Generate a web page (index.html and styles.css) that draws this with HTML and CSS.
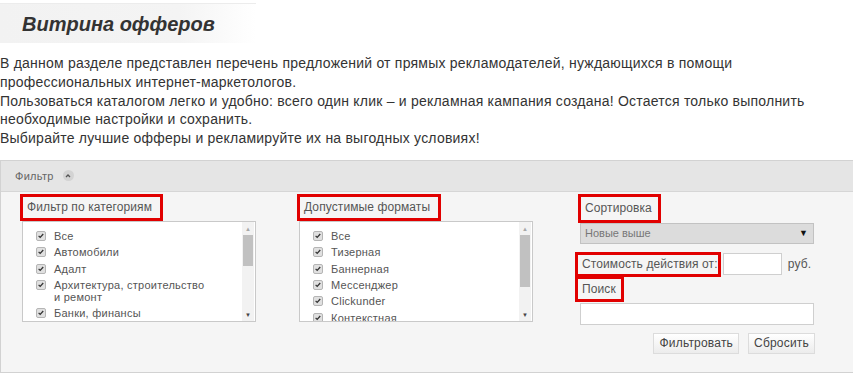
FILE: index.html
```html
<!DOCTYPE html>
<html lang="ru">
<head>
<meta charset="utf-8">
<title>Витрина офферов</title>
<link rel="stylesheet" href="styles.css">
</head>
<body>
<div class="title-box"><h1>Витрина офферов</h1></div>
<div class="intro">
В данном разделе представлен перечень предложений от прямых рекламодателей, нуждающихся в помощи<br>
профессиональных интернет-маркетологов.<br>
Пользоваться каталогом легко и удобно: всего один клик – и рекламная кампания создана! Остается только выполнить<br>
необходимые настройки и сохранить.<br>
Выбирайте лучшие офферы и рекламируйте их на выгодных условиях!
</div>

<div class="panel">
  <div class="panel-head">
    <span>Фильтр</span>
    <span class="toggle"><svg width="10" height="10" viewBox="0 0 10 10"><path d="M3 6 L5 4 L7 6" fill="none" stroke="#555" stroke-width="1.3"/></svg></span>
  </div>
  <div class="panel-body">
    <div class="col">
      <div class="mark">Фильтр по категориям</div>
      <div class="listbox">
        <ul class="items">
          <li><span class="cb"></span><span class="lbl">Все</span></li>
          <li><span class="cb"></span><span class="lbl">Автомобили</span></li>
          <li><span class="cb"></span><span class="lbl">Адалт</span></li>
          <li><span class="cb"></span><span class="lbl">Архитектура, строительство и ремонт</span></li>
          <li><span class="cb"></span><span class="lbl">Банки, финансы</span></li>
        </ul>
        <div class="sbar"><span class="arr">▲</span><span class="thumb"></span><span class="fill"></span><span class="arr">▼</span></div>
      </div>
    </div>
    <div class="col">
      <div class="mark">Допустимые форматы</div>
      <div class="listbox">
        <ul class="items">
          <li><span class="cb"></span><span class="lbl">Все</span></li>
          <li><span class="cb"></span><span class="lbl">Тизерная</span></li>
          <li><span class="cb"></span><span class="lbl">Баннерная</span></li>
          <li><span class="cb"></span><span class="lbl">Мессенджер</span></li>
          <li><span class="cb"></span><span class="lbl">Clickunder</span></li>
          <li><span class="cb"></span><span class="lbl">Контекстная</span></li>
        </ul>
        <div class="sbar"><span class="arr">▲</span><span class="thumb thumb-long"></span><span class="fill"></span><span class="arr">▼</span></div>
      </div>
    </div>
    <div class="col">
      <div class="mark mark-sort">Сортировка</div>
      <div class="select"><span>Новые выше</span><span class="sel-arr">▼</span></div>
      <div class="cost-row">
        <div class="mark">Стоимость действия от:</div>
        <div class="input input-cost"></div>
        <span class="unit">руб.</span>
      </div>
      <div class="mark mark-search">Поиск</div>
      <div class="input input-search"></div>
      <div class="buttons">
        <button class="btn">Фильтровать</button>
        <button class="btn">Сбросить</button>
      </div>
    </div>
  </div>
</div>
</body>
</html>
```

FILE: styles.css
```css
* { box-sizing: border-box; }
body {
  margin: 0;
  background: #fff;
  font-family: "Liberation Sans", Arial, sans-serif;
  color: #333;
}
.title-box {
  margin-top: 3px;
  width: 256px;
  height: 40px;
  padding-left: 22px;
  background: linear-gradient(to right, #f2f2f2 0%, #f4f4f4 70%, #fff 100%);
  border-top: 1px solid #ececec;
}
.title-box h1 {
  margin: 0;
  font-size: 20px;
  font-weight: bold;
  font-style: italic;
  line-height: 40px;
  color: #333;
}
.intro {
  margin-top: 11px;
  font-size: 14px;
  line-height: 18.75px;
  letter-spacing: 0.22px;
  color: #333;
}
.panel {
  margin-top: 12px;
  border: 1px solid #d2d2d2;
  border-right: none;
  background: #f5f5f5;
  height: 213px;
}
.panel-head {
  height: 31px;
  background: #e5e5e5;
  border-bottom: 1px solid #d6d6d6;
  display: flex;
  align-items: center;
  padding-left: 14px;
  gap: 9px;
  font-size: 11px;
  color: #666;
  letter-spacing: 0.3px;
}
.toggle {
  width: 11px;
  height: 11px;
  border-radius: 50%;
  background: #d3d3d3;
  display: flex;
  align-items: center;
  justify-content: center;
}
.panel-body {
  display: grid;
  grid-template-columns: 277px 278px 1fr;
  padding: 2px 0 0 19px;
}
.mark {
  display: inline-block;
  border: 3px solid #e10000;
  padding: 3px 8px 3px 4px;
  font-size: 12px;
  line-height: 15px;
  color: #555;
  letter-spacing: 0.1px;
  white-space: nowrap;
}
.col { display: flex; flex-direction: column; align-items: flex-start; }
.listbox {
  margin-left: 2px;
  width: 234px;
  height: 101px;
  background: #fff;
  border: 1px solid #c9c9c9;
  display: flex;
  overflow: hidden;
}
.items {
  list-style: none;
  margin: 0;
  padding: 6px 0 0 13px;
  flex: 1;
  font-size: 11px;
  color: #555;
  letter-spacing: 0.25px;
}
.items li {
  display: flex;
  align-items: flex-start;
  padding: 2px 0 2.4px;
  line-height: 12px;
}
.cb {
  flex: none;
  width: 10px;
  height: 10px;
  margin: 1px 8px 0 0;
  border: 1px solid #b5b5b5;
  border-radius: 2px;
  background: #e0e0e0 url("data:image/svg+xml,%3Csvg xmlns='http://www.w3.org/2000/svg' width='10' height='10'%3E%3Cpath d='M2 4.8 L4 6.8 L7.8 2.5' fill='none' stroke='%23333' stroke-width='1.6'/%3E%3C/svg%3E") center/8px 8px no-repeat;
}
.lbl { max-width: 158px; }
.sbar {
  flex: none;
  width: 12px;
  margin-right: 1px;
  display: flex;
  flex-direction: column;
  align-items: center;
  background: #f2f2f2;
}
.arr {
  font-size: 6px;
  line-height: 12px;
  height: 12px;
  color: #a8a8a8;
}
.sbar .arr:last-child { color: #444; }
.sbar .arr:first-child { line-height: 14px; }
.thumb {
  width: 10px;
  height: 31px;
  margin-top: 1px;
  background: #c1c1c1;
}
.thumb-long { height: 52px; }
.fill { flex: 1; }
.mark-sort { margin-left: 3px; padding-top: 4px; padding-bottom: 4px; padding-right: 6px; }
.select {
  margin-left: 5px;
  width: 234px;
  height: 21px;
  background: #dcdcdc;
  border: 1px solid #c2c2c2;
  display: flex;
  align-items: center;
  justify-content: space-between;
  padding: 0 5px 0 4px;
  font-size: 11px;
  color: #777;
}
.sel-arr { font-size: 9px; color: #111; }
.cost-row {
  margin-top: 8px;
  display: flex;
  align-items: center;
}
.cost-row .mark { padding: 2px 0 2px 4px; }
.input {
  background: #fff;
  border: 1px solid #cfcfcf;
  height: 22px;
}
.input-cost { width: 59px; margin-left: 2px; }
.unit {
  margin-left: 6px;
  font-size: 12px;
  color: #555;
  letter-spacing: 0.2px;
}
.mark-search { margin-top: -1px; padding: 3px 5px 2px 4px; }
.input-search { margin-left: 5px; width: 234px; margin-top: 1px; }
.buttons {
  margin-top: 8px;
  width: 240px;
  display: flex;
  justify-content: flex-end;
  gap: 9px;
}
.btn {
  height: 21px;
  padding: 0 5px;
  font-family: "Liberation Sans", Arial, sans-serif;
  font-size: 12px;
  letter-spacing: 0.2px;
  color: #444;
  background: linear-gradient(#fff, #ececec);
  border: 1px solid #dcdcdc;
  border-radius: 0;
}
```
